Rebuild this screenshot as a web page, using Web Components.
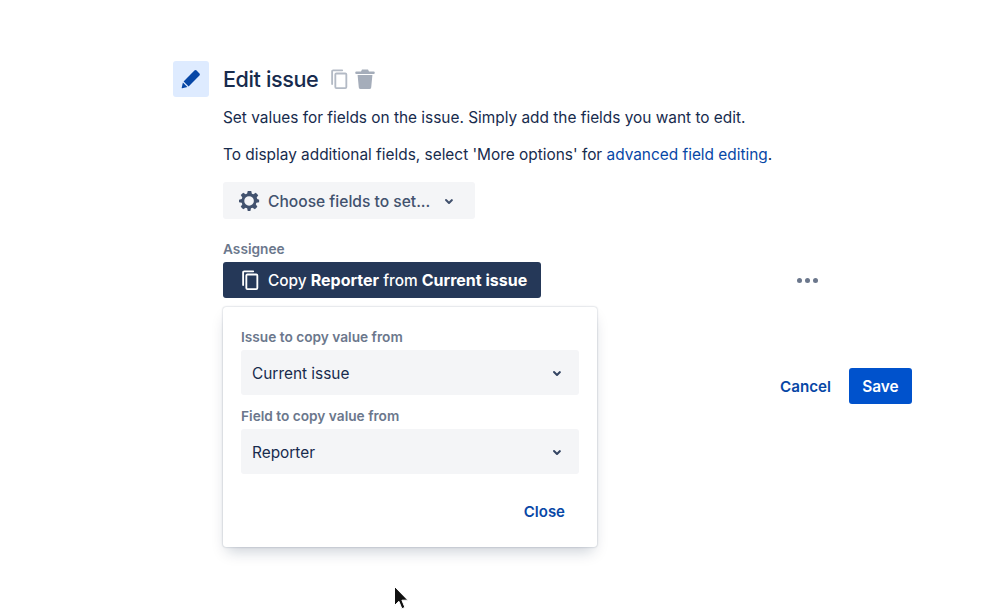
<!DOCTYPE html>
<html>
<head>
<meta charset="utf-8">
<style>
  html, body { margin: 0; background: #fff; }
  body { font-family: Inter, "Liberation Sans", sans-serif; color: #172b4d; height: 612px; overflow: hidden; position: relative; }
</style>
</head>
<body>
<edit-issue-page></edit-issue-page>
<script>
const chevron = `<svg width="24" height="24" viewBox="0 0 24 24"><path d="M8.3 10.3a1 1 0 0 1 1.4 0l2.3 2.3 2.3-2.3a1 1 0 0 1 1.4 1.4l-3 3a1 1 0 0 1-1.4 0l-3-3a1 1 0 0 1 0-1.4z" fill="currentColor"/></svg>`;

const copyIcon = (size, color) => `<svg width="${size}" height="${size}" viewBox="0 0 24 24" fill="none" stroke="${color}" stroke-width="2"><path d="M4.5 17.5V3.6a1.1 1.1 0 0 1 1.1-1.1h9.9" stroke-linecap="round"/><rect x="8" y="6" width="12" height="16" rx="1.2"/></svg>`;

class SelectBox extends HTMLElement {
  constructor() {
    super();
    this.attachShadow({ mode: 'open' });
    this.shadowRoot.innerHTML = `
      <style>
        :host { display: block; }
        .label { font-size: 13.7px; line-height: 20px; font-weight: 600; color: #6b778c; margin-bottom: 3px; }
        .box {
          height: 45px;
          background: #f4f5f7;
          border-radius: 3px;
          display: flex;
          align-items: center;
          justify-content: space-between;
          padding: 0 10px 0 11px;
          font-size: 15.4px;
          color: #172b4d;
        }
        .box span { padding-top: 2px; }
        svg { color: #344563; display: block; }
      </style>
      <div class="label">${this.getAttribute('label')}</div>
      <div class="box"><span><slot></slot></span>${chevron}</div>
    `;
  }
}

class CopyPopover extends HTMLElement {
  constructor() {
    super();
    this.attachShadow({ mode: 'open' });
    this.shadowRoot.innerHTML = `
      <style>
        :host {
          display: block;
          position: absolute;
          left: 0;
          top: 45px;
          width: 374px;
          height: 240px;
          box-sizing: border-box;
          padding: 20px 18px 0;
          background: #fff;
          border-radius: 3px;
          box-shadow: 0 8px 14px -4px rgba(9,30,66,0.22), 0 0 2px rgba(9,30,66,0.32);
        }
        .fields { display: flex; flex-direction: column; gap: 11px; }
        .foot { display: flex; justify-content: flex-end; margin-top: 28px; padding-right: 14px; }
        .close { font-size: 15px; line-height: 20px; font-weight: 600; color: #0747a6; }
      </style>
      <div class="fields">
        <select-box label="Issue to copy value from">Current issue</select-box>
        <select-box label="Field to copy value from">Reporter</select-box>
      </div>
      <div class="foot"><span class="close">Close</span></div>
    `;
  }
}

class EditIssuePage extends HTMLElement {
  constructor() {
    super();
    this.attachShadow({ mode: 'open' });
    this.shadowRoot.innerHTML = `
      <style>
        :host { display: flex; gap: 14px; padding: 61px 86px 0 173px; font-size: 15.4px; color: #172b4d; }
        .tile {
          flex: none;
          width: 36px;
          height: 36px;
          border-radius: 3px;
          background: #deebff;
          display: flex;
          align-items: center;
          justify-content: center;
        }
        .main { flex: 1; min-width: 0; }
        .title-row { display: flex; align-items: center; height: 36px; }
        h1 { margin: 0; font-size: 21.6px; line-height: 37px; font-weight: 500; color: #172b4d; letter-spacing: -0.4px; }
        .tools { display: flex; align-items: center; gap: 4px; margin-left: 10px; }
        .tools svg { display: block; }
        p { margin: 0; line-height: 24px; }
        .p1 { margin-top: 9px; }
        .p2 { margin-top: 13px; }
        a { color: #0747a6; text-decoration: none; }
        .choose {
          display: flex;
          align-items: center;
          height: 37px;
          box-sizing: border-box;
          width: 252px;
          margin-top: 15px;
          padding-left: 16px;
          background: #f4f5f7;
          border-radius: 3px;
          color: #42526e;
          font-size: 15.6px;
          font-weight: 500;
        }
        .choose .text { padding-top: 2px; }
        .choose .gear { margin-right: 8px; display: block; }
        .choose .chev { margin-left: 7px; display: flex; color: #42526e; }
        .label { font-size: 13.7px; line-height: 20px; font-weight: 600; color: #6b778c; margin-top: 20px; }
        .assignee { display: flex; align-items: center; justify-content: space-between; margin-top: 3px; padding-right: 94px; position: relative; }
        .chip {
          display: inline-flex;
          align-items: center;
          height: 36px;
          width: 318px;
          box-sizing: border-box;
          padding-left: 16px;
          gap: 7px;
          background: #253858;
          border-radius: 3px;
          color: #fff;
          font-size: 15.4px;
          font-weight: 500;
          white-space: nowrap;
        }
        .chip b { font-weight: 700; font-size: 16px; }
        .chip svg { display: block; }
        .dots { display: flex; gap: 3px; }
        .dots i { width: 5px; height: 5px; border-radius: 50%; background: #6b778c; display: block; }
        .actions { display: flex; justify-content: flex-end; align-items: center; gap: 18px; margin-top: 70px; }
        .cancel { font-size: 15.2px; font-weight: 600; color: #0747a6; }
        .save {
          width: 63px;
          height: 36px;
          background: #0052cc;
          color: #fff;
          font-size: 15.4px;
          font-weight: 600;
          border-radius: 3px;
          display: flex;
          align-items: center;
          justify-content: center;
        }
        .cursor { position: absolute; left: 393px; top: 585px; display: block; }
      </style>
      <div class="tile">
        <svg width="20" height="20" viewBox="0 0 20 20"><path d="M13.4 1.6a1.6 1.6 0 0 1 2.2 0l2.8 2.8a1.6 1.6 0 0 1 0 2.2L7.6 17.4 2.6 12.4z" fill="#0747a6"/><path d="M1.9 13.6l4.5 4.5-5.2 1.2a.4.4 0 0 1-.5-.5z" fill="#0747a6"/></svg>
      </div>
      <div class="main">
        <div class="title-row">
          <h1>Edit issue</h1>
          <div class="tools">
            ${copyIcon(22, '#b3bac5')}
            <svg width="22" height="22" viewBox="0 0 22 22"><path d="M8 1.5h6l1 2h4.6a.9.9 0 0 1 0 2.4H2.4a.9.9 0 0 1 0-2.4H7z" fill="#a5adba"/><path d="M3.6 7h14.8l-1.2 12.4a1.8 1.8 0 0 1-1.8 1.6H6.6a1.8 1.8 0 0 1-1.8-1.6z" fill="#a5adba"/></svg>
          </div>
        </div>
        <p class="p1">Set values for fields on the issue. Simply add the fields you want to edit.</p>
        <p class="p2">To display additional fields, select 'More options' for <a>advanced field editing</a>.</p>
        <div class="choose">
          <svg class="gear" width="21" height="21" viewBox="0 0 24 24"><path fill="#42526e" fill-rule="evenodd" d="M10 1h4l.7 3.2 1.7.7 2.8-1.8 2.8 2.8-1.8 2.8.7 1.7L23 11v3l-3.1.7-.7 1.7 1.8 2.8-2.8 2.8-2.8-1.8-1.7.7L13 24h-3l-.7-3.1-1.7-.7-2.8 1.8-2.8-2.8 1.8-2.8-.7-1.7L0 14v-3l3.1-.7.7-1.7L2 5.8 4.8 3l2.8 1.8 1.7-.7zM11.5 7a5.5 5.5 0 1 0 0 11 5.5 5.5 0 0 0 0-11z"/></svg>
          <span class="text">Choose fields to set...</span>
          <span class="chev">${chevron}</span>
        </div>
        <div class="label">Assignee</div>
        <div class="assignee">
          <span class="chip">${copyIcon(22, '#fff')}<span>Copy <b>Reporter</b> from <b>Current issue</b></span></span>
          <span class="dots"><i></i><i></i><i></i></span>
          <copy-popover></copy-popover>
        </div>
        <div class="actions">
          <span class="cancel">Cancel</span>
          <span class="save">Save</span>
        </div>
      </div>
      <svg class="cursor" width="18" height="27" viewBox="0 0 18 27"><path d="M1.5 1.5v19l4.4-4.2 3 7.4 3-1.3-3-7.2h6z" fill="#111" stroke="#fff" stroke-width="1"/></svg>
    `;
  }
}

customElements.define('select-box', SelectBox);
customElements.define('copy-popover', CopyPopover);
customElements.define('edit-issue-page', EditIssuePage);
</script>
</body>
</html>
